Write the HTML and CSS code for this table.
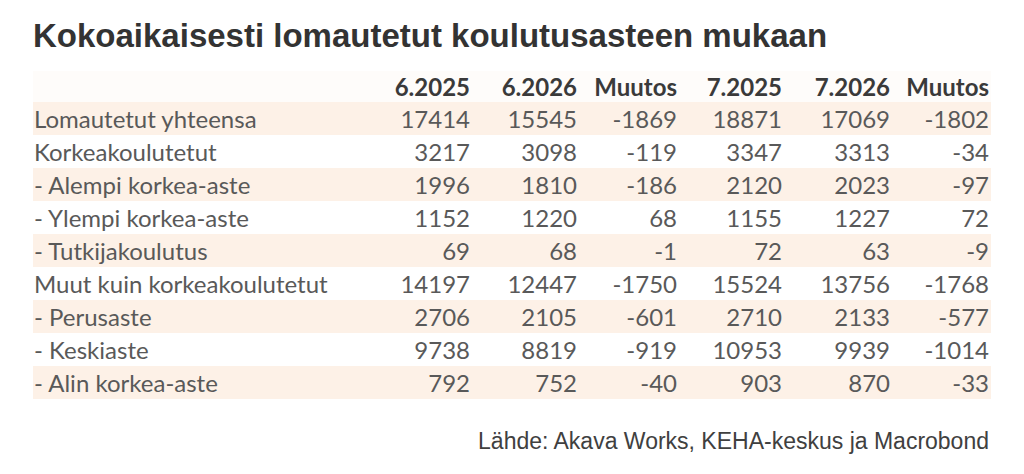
FILE: index.html
```html
<!DOCTYPE html>
<html lang="fi">
<head>
<meta charset="utf-8">
<title>Kokoaikaisesti lomautetut koulutusasteen mukaan</title>
<link rel="stylesheet" href="styles.css">
</head>
<body>
<div class="page">
  <h1 class="title">Kokoaikaisesti lomautetut koulutusasteen mukaan</h1>
  <div class="table">
    <div class="row head">
      <div class="label"></div>
      <div class="num">6.2025</div>
      <div class="num">6.2026</div>
      <div class="num">Muutos</div>
      <div class="num">7.2025</div>
      <div class="num">7.2026</div>
      <div class="num">Muutos</div>
    </div>
    <div class="row band">
      <div class="label">Lomautetut yhteensa</div>
      <div class="num">17414</div><div class="num">15545</div><div class="num">-1869</div>
      <div class="num">18871</div><div class="num">17069</div><div class="num">-1802</div>
    </div>
    <div class="row">
      <div class="label">Korkeakoulutetut</div>
      <div class="num">3217</div><div class="num">3098</div><div class="num">-119</div>
      <div class="num">3347</div><div class="num">3313</div><div class="num">-34</div>
    </div>
    <div class="row band">
      <div class="label">- Alempi korkea-aste</div>
      <div class="num">1996</div><div class="num">1810</div><div class="num">-186</div>
      <div class="num">2120</div><div class="num">2023</div><div class="num">-97</div>
    </div>
    <div class="row">
      <div class="label">- Ylempi korkea-aste</div>
      <div class="num">1152</div><div class="num">1220</div><div class="num">68</div>
      <div class="num">1155</div><div class="num">1227</div><div class="num">72</div>
    </div>
    <div class="row band">
      <div class="label">- Tutkijakoulutus</div>
      <div class="num">69</div><div class="num">68</div><div class="num">-1</div>
      <div class="num">72</div><div class="num">63</div><div class="num">-9</div>
    </div>
    <div class="row">
      <div class="label">Muut kuin korkeakoulutetut</div>
      <div class="num">14197</div><div class="num">12447</div><div class="num">-1750</div>
      <div class="num">15524</div><div class="num">13756</div><div class="num">-1768</div>
    </div>
    <div class="row band">
      <div class="label">- Perusaste</div>
      <div class="num">2706</div><div class="num">2105</div><div class="num">-601</div>
      <div class="num">2710</div><div class="num">2133</div><div class="num">-577</div>
    </div>
    <div class="row">
      <div class="label">- Keskiaste</div>
      <div class="num">9738</div><div class="num">8819</div><div class="num">-919</div>
      <div class="num">10953</div><div class="num">9939</div><div class="num">-1014</div>
    </div>
    <div class="row band">
      <div class="label">- Alin korkea-aste</div>
      <div class="num">792</div><div class="num">752</div><div class="num">-40</div>
      <div class="num">903</div><div class="num">870</div><div class="num">-33</div>
    </div>
  </div>
  <div class="source">Lähde: Akava Works, KEHA-keskus ja Macrobond</div>
</div>
</body>
</html>
```

FILE: styles.css
```css
html, body {
  margin: 0;
  padding: 0;
  background: #ffffff;
}

.page {
  width: 1024px;
  height: 474px;
  padding: 0 33px 0 33px;
  box-sizing: border-box;
}

.title {
  margin: 0;
  padding-top: 17px;
  height: 71px;
  box-sizing: border-box;
  font-family: "Liberation Sans", Arial, sans-serif;
  font-weight: bold;
  font-size: 33px;
  line-height: 38px;
  color: #333333;
}

.table {
  font-family: Lato, "Open Sans", sans-serif;
  font-size: 24px;
  color: #595959;
}

.row {
  display: grid;
  grid-template-columns: 330px 107px 107px 100px 105px 108px 99px;
  height: 33px;
  align-items: center;
  padding-right: 2px;
  box-sizing: border-box;
}

.row.head {
  height: 31px;
  background: #fefcfa;
  font-weight: bold;
  color: #3a3a3a;
}

.row.band {
  background: #fdf1e7;
}

.label {
  padding-left: 1px;
  white-space: nowrap;
}

.num {
  text-align: right;
  white-space: nowrap;
}

.source {
  margin-top: 29px;
  text-align: right;
  padding-right: 2px;
  font-family: "Liberation Sans", Arial, sans-serif;
  font-size: 23px;
  line-height: 26px;
  color: #404040;
}
```
